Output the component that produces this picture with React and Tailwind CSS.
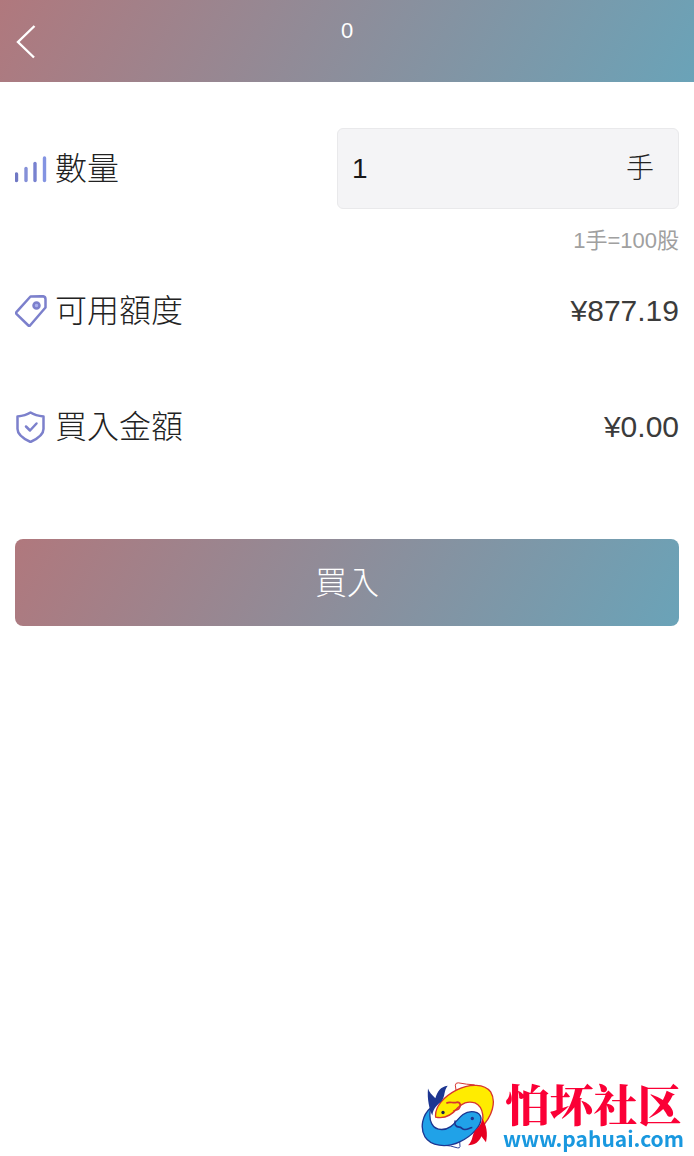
const brandGradient = "bg-[linear-gradient(120deg,#b0787d_0%,#6aa3b8_100%)]";

function BarsIcon() {
  return (
    <svg className="size-8 shrink-0" viewBox="0 0 32 32" fill="none" strokeWidth="3.4" strokeLinecap="round" aria-hidden="true">
      <path d="M1.500 21v6.500" stroke="#7078c4" />
      <path d="M11 15.500v12" stroke="#8590d8" />
      <path d="M20 10.500v17" stroke="#7882d0" />
      <path d="M29.500 5v22.500" stroke="#8494e2" />
    </svg>
  );
}

function TagIcon() {
  return (
    <svg className="size-8 shrink-0" viewBox="0 0 32 32" fill="none" stroke="#7c80cc" strokeWidth="2.500" strokeLinejoin="round" aria-hidden="true">
      <path d="M15.500 1.500 27.500 1.200q3 0 3 3V12.500L15 30.500q-.8.8-1.600 0L1.400 18.800q-.8-.8 0-1.600Z" />
      <circle cx="21.500" cy="10.500" r="3" fill="#aab0ee" />
    </svg>
  );
}

function ShieldIcon() {
  return (
    <svg className="size-8 shrink-0" viewBox="0 0 32 32" fill="none" stroke="#7c80cc" strokeWidth="2.500" strokeLinecap="round" strokeLinejoin="round" aria-hidden="true">
      <path d="M15.500 1.500C11.500 4 7 5 2.500 5.500V18c0 6 6.500 10 13 13 6.500-3 13-7 13-13V5.500C24 5 19.500 4 15.500 1.500Z" />
      <path d="m11 15.500 4 4 6.500-7" />
    </svg>
  );
}

function FishLogo() {
  return (
    <svg className="h-[69px] w-[74px] shrink-0" viewBox="34 30 222 206" aria-hidden="true">
      {/* fins */}
      <path d="M139 57 137 42q1-8 9-7 25 5 49 6" fill="#fff" stroke="#d7352f" strokeWidth="3" />
      <path d="M150 210 151 226q-1 6-8 4-20-7-42-8" fill="#fff" stroke="#2a4099" strokeWidth="3" />
      {/* yellow fish */}
      <path d="M78 138C74 106 105 75 140 57c40-21 85-19 103 5 17 28 7 73-31 110 12-24 12-64-16-77-24-7-38 3-51 14-20 25-40 35-67 29Z" fill="#ffec00" stroke="#d7352f" strokeWidth="4" />
      <path d="M110 96c12-7 20 2 32-3 12 0 12 12 5 20-5 4-12 3-16 8" fill="none" stroke="#d7352f" strokeWidth="5" />
      <circle cx="100" cy="124" r="5" fill="#17204f" />
      {/* blue fish */}
      <path d="M63 110C38 132 30 170 46 197c17 27 62 35 104 15 37-17 66-49 64-72-3-20-33-25-54-10-20 14-31 45-64 45-28 0-41-25-33-65Z" fill="#20a2e8" stroke="#1d3691" strokeWidth="4" />
      <path d="M137 148c-5 12 2 20 12 20 8 0 8 8 17 7 10 0 13-5 22-6" fill="none" stroke="#1d3691" strokeWidth="5" />
      <circle cx="188" cy="142" r="5" fill="#1d3691" />
      {/* tails */}
      <path d="M55 52c3 10 12 20 22 29 7-20 15-34 37-37-12 15-7 31-17 44-12 14-26 19-29 45-9-20-16-48-13-81Z" fill="#1d3691" />
      <path d="M218 142c-3 20-12 25-22 37-10 13-5 30-21 43 22-1 34-11 40-27l14 18c6-25 2-50-11-71Z" fill="#e60020" />
    </svg>
  );
}

function InfoRow({ icon, label, value }) {
  return (
    <div className="flex h-[116px] items-center justify-between">
      <dt className="flex items-center gap-2 text-[32px] leading-10 font-light text-[#222222]">
        {icon}
        {label}
      </dt>
      <dd className="text-3xl">{value}</dd>
    </div>
  );
}

export default function App() {
  return (
    <div className="min-h-screen bg-white font-['Liberation_Sans','Noto_Sans_CJK_TC',sans-serif] text-[#3b3b3b]">
      {/* HEADER */}
      <header className={`${brandGradient} grid h-[82px] grid-cols-[1fr_auto_1fr] px-4 text-white`}>
        <button type="button" aria-label="返回" className="justify-self-start">
          <svg className="h-9 w-5" viewBox="0 0 20 36" fill="none" stroke="currentColor" strokeWidth="2.400" aria-hidden="true">
            <path d="M18.500 3 2 19l16 15.500" />
          </svg>
        </button>
        <h1 className="pt-4 text-[22px] leading-[30px]">0</h1>
      </header>

      <main className="px-[15px] pt-[46px]">
        {/* QUANTITY */}
        <div className="flex items-center justify-between">
          <label htmlFor="quantity" className="flex items-center gap-2 text-[32px] leading-10 font-light text-[#222222]">
            <BarsIcon />
            數量
          </label>
          <div className="flex h-[81px] w-[342px] items-center rounded-md border border-[#e9e9eb] bg-[#f4f4f6] pr-6 pl-3.5">
            <input
              id="quantity"
              type="text"
              inputMode="numeric"
              defaultValue="1"
              className="min-w-0 flex-1 text-[28px] text-[#181818] outline-none"
            />
            <span className="text-[28px] font-light text-[#222222]">手</span>
          </div>
        </div>
        <p className="pt-4 text-right text-[22px] leading-8 text-[#a0a0a0]">1手=100股</p>

        <dl className="-mt-1">
          <InfoRow icon={<TagIcon />} label="可用額度" value="¥877.19" />
          <InfoRow icon={<ShieldIcon />} label="買入金額" value="¥0.00" />
        </dl>

        <button
          type="button"
          className={`${brandGradient} mt-[54px] h-[87px] w-full rounded-lg text-[32px] font-light text-white`}
        >
          買入
        </button>
      </main>

      {/* SITE MARK */}
      <a href="#" className="fixed right-2.5 bottom-1.5 flex items-center gap-2">
        <FishLogo />
        <span className="flex flex-col items-center">
          <span className="text-[44px] leading-[46px] font-black text-[#fb0036] font-['Noto_Serif_CJK_SC','Noto_Sans_CJK_SC',serif]">
            怕坏社区
          </span>
          <span className="text-[21px] leading-6 font-bold text-[#1998df] font-['Noto_Sans_CJK_SC',sans-serif]">
            www.pahuai.com
          </span>
        </span>
      </a>
    </div>
  );
}
